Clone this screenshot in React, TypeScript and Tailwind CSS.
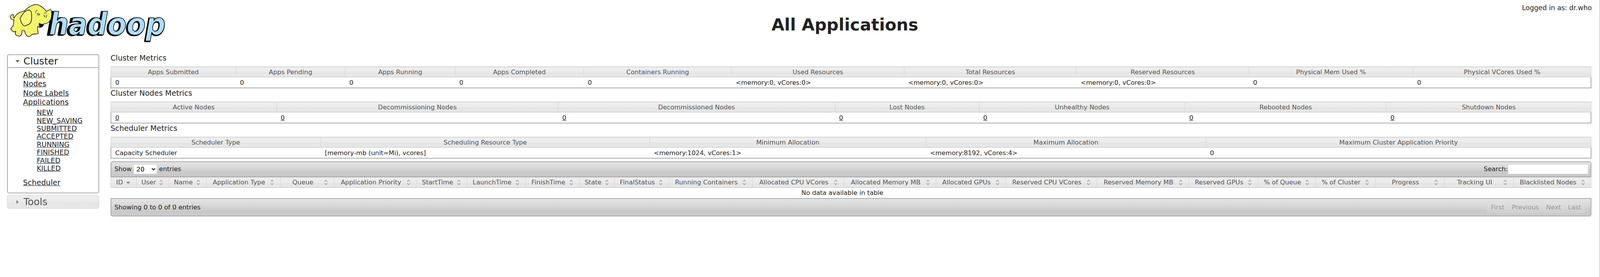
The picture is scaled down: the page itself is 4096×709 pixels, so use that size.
import React from 'react';

const glass = 'bg-[linear-gradient(#eeeeee_0%,#ebebeb_50%,#e5e5e5_58%,#e8e8e8_100%)]';
const widget = 'bg-[linear-gradient(#e4e4e4_0%,#d8d8d8_40%,#c9c9c9_72%,#cbcbcb_100%)]';

const clusterHeads = ['Apps Submitted', 'Apps Pending', 'Apps Running', 'Apps Completed', 'Containers Running', 'Used Resources', 'Total Resources', 'Reserved Resources', 'Physical Mem Used %', 'Physical VCores Used %'];
const clusterVals = ['0', '0', '0', '0', '0', '<memory:0, vCores:0>', '<memory:0, vCores:0>', '<memory:0, vCores:0>', '0', '0'];
const nodeHeads = ['Active Nodes', 'Decommissioning Nodes', 'Decommissioned Nodes', 'Lost Nodes', 'Unhealthy Nodes', 'Rebooted Nodes', 'Shutdown Nodes'];
const schedHeads = ['Scheduler Type', 'Scheduling Resource Type', 'Minimum Allocation', 'Maximum Allocation', 'Maximum Cluster Application Priority'];
const schedVals = ['Capacity Scheduler', '[memory-mb (unit=Mi), vcores]', '<memory:1024, vCores:1>', '<memory:8192, vCores:4>', '0'];
const appHeads = ['ID', 'User', 'Name', 'Application Type', 'Queue', 'Application Priority', 'StartTime', 'LaunchTime', 'FinishTime', 'State', 'FinalStatus', 'Running Containers', 'Allocated CPU VCores', 'Allocated Memory MB', 'Allocated GPUs', 'Reserved CPU VCores', 'Reserved Memory MB', 'Reserved GPUs', '% of Queue', '% of Cluster', 'Progress', 'Tracking UI', 'Blacklisted Nodes'];
const states = ['NEW', 'NEW_SAVING', 'SUBMITTED', 'ACCEPTED', 'RUNNING', 'FINISHED', 'FAILED', 'KILLED'];

const Logo = () => (
  <svg viewBox="0 0 2044 510" className="w-[464px] h-[116px] shrink-0">
    <g fontFamily="'DejaVu Sans', sans-serif" fontWeight="700" fontStyle="italic" fontSize="345">
      <text x="528" y="396" textLength="1335" lengthAdjust="spacingAndGlyphs" fill="#000" stroke="#000" strokeWidth="16" strokeLinejoin="round">hadoop</text>
      <text x="552" y="392" textLength="1315" lengthAdjust="spacingAndGlyphs" fill="#aedcfc" stroke="#000" strokeWidth="7" strokeLinejoin="round">hadoop</text>
    </g>
    <g stroke="#151515" strokeWidth="7" strokeLinejoin="round" strokeLinecap="round">
      <path fill="#f3f36c" d="M400 50 C440 48 490 85 525 128 C540 122 555 105 572 108 C588 115 584 150 580 190 C575 230 550 262 492 270 C490 295 465 312 445 308 C432 302 428 295 425 300 C420 325 430 355 432 376 C410 385 375 382 358 390 C345 410 325 418 305 405 C285 385 280 365 278 345 C262 345 255 342 248 345 C248 375 245 398 222 408 C195 405 175 398 172 380 C172 368 176 360 178 352 C160 365 145 358 128 338 C115 322 130 305 145 298 C150 280 155 250 158 222 C135 228 118 210 118 188 C122 172 135 160 150 165 C152 180 148 192 158 205 C178 160 225 130 272 125 C300 100 340 60 400 50 Z" />
      <path fill="#f6f680" d="M226 210 C245 170 275 125 310 115 C335 110 352 118 354 145 C358 180 358 220 350 245 C340 275 295 292 268 290 C245 280 238 240 226 210 Z" />
      <path fill="#111" d="M443 262 C458 272 475 280 490 272 C488 292 468 306 450 302 C442 290 440 275 443 262 Z" />
      <path fill="none" strokeWidth="5" d="M418 150 C425 160 440 150 452 162 M400 145 C402 130 410 120 418 115 M495 150 C505 145 515 140 525 150 M495 170 C500 190 505 195 510 175 M520 200 C522 190 525 180 528 170" />
      <ellipse cx="432" cy="166" rx="10" ry="9" fill="#eee" strokeWidth="4" />
    </g>
    <path d="M310 70 L335 48 M322 72 L342 58 M95 190 L118 160 M105 198 L122 172" stroke="#999" strokeWidth="4" fill="none" />
  </svg>
);

const SortIcon = ({ active }: { active: boolean }) =>
  active ? (
    <svg viewBox="0 0 10 6" className="w-[10px] h-[6px] shrink-0 ml-[7px] mr-[16px] mt-[2px]">
      <path d="M0 0 H10 L5 6 Z" fill="#888" />
    </svg>
  ) : (
    <svg viewBox="0 0 9 14" className="w-[9px] h-[14px] shrink-0 ml-[9px] mr-[16px]">
      <path d="M1 5 L4.5 1.2 L8 5 M1 9 L4.5 12.8 L8 9" fill="none" stroke="#8c8c8c" strokeWidth="1.3" />
    </svg>
  );

const Metrics = ({ title, grid, heads, vals, link }: { title: string; grid: string; heads: string[]; vals: string[]; link?: boolean }) => (
  <section>
    <h3 className="text-[19.1px] leading-[24px] pt-[1px] mb-[9px] font-normal text-[#222]">{title}</h3>
    <div className={`grid ${grid} h-[28px] border-y-2 border-x border-[#d3d3d3] ${glass} text-[#555]`}>
      {heads.map((h, i) => (
        <div key={h} className={`flex items-center justify-center pt-[1px] ${i ? 'border-l border-[#d3d3d3]' : ''}`}>{h}</div>
      ))}
    </div>
    <div className={`grid ${grid} h-[28px] border-x-2 border-b-2 border-[#aaaaaa] text-[#222]`}>
      {vals.map((v, i) => (
        <div key={i} className="flex items-center pl-[10px] pt-[1px]">
          {link ? <a className="underline">{v}</a> : v}
        </div>
      ))}
    </div>
  </section>
);

export default function App() {
  return (
    <div className="w-[4096px] h-[709px] overflow-hidden bg-white border-r border-[#aaaaaa] font-['DejaVu_Sans',sans-serif] text-[16.35px] leading-[20px] text-[#222]">
      <header className="flex h-[136px]">
        <Logo />
        <h1 className="ml-[1511px] mt-[38px] text-[42.8px] leading-[50px] font-bold text-[#222]">All Applications</h1>
        <div className="ml-auto mr-[20px] mt-[10px] text-[17.3px]">Logged in as: dr.who</div>
      </header>

      <div className="flex">
        <aside className="w-[236px] ml-[18px] mt-[3px] shrink-0">
          <div className="h-[356px] border-2 border-[#aaaaaa] rounded-[5px]">
            <div className="h-[33px] flex items-center border-b-2 border-[#aaaaaa] text-[25px] text-[#222]">
              <svg viewBox="0 0 10 6" className="w-[10px] h-[6px] ml-[20px] mr-[10px]">
                <path d="M0 0 H10 L5 6 Z" fill="#555" />
              </svg>
              Cluster
            </div>
            <div className="pl-[39px] pt-[6px] text-[19.1px] leading-[23.3px]">
              {['About', 'Nodes', 'Node Labels', 'Applications'].map((l) => (
                <div key={l}><a className="underline">{l}</a></div>
              ))}
              <div className="pl-[35px] mt-[5px] text-[17.7px] leading-[20.4px]">
                {states.map((s) => (
                  <div key={s}><a className="underline">{s}</a></div>
                ))}
              </div>
              <div className="mt-[15px]"><a className="underline">Scheduler</a></div>
            </div>
          </div>
          <div className={`h-[35px] mt-[4px] flex items-center border border-[#d3d3d3] rounded-[5px] ${glass} text-[25px] text-[#555]`}>
            <svg viewBox="0 0 6 10" className="w-[6px] h-[10px] ml-[23px] mr-[12px]">
              <path d="M0 0 L6 5 L0 10 Z" fill="#888" />
            </svg>
            Tools
          </div>
        </aside>

        <main className="w-[3791px] ml-[29px]">
          <Metrics
            title="Cluster Metrics"
            grid="grid-cols-[319.3px_280px_281.4px_329px_378.8px_441.5px_441.5px_441.5px_419.7px_1fr]"
            heads={clusterHeads}
            vals={clusterVals}
          />
          <Metrics
            title="Cluster Nodes Metrics"
            grid="grid-cols-[423.5px_720.8px_708.6px_369.2px_527.3px_515.2px_1fr]"
            heads={nodeHeads}
            vals={nodeHeads.map(() => '0')}
            link
          />
          <Metrics
            title="Scheduler Metrics"
            grid="grid-cols-[536.6px_842.1px_707.2px_716.7px_1fr]"
            heads={schedHeads}
            vals={schedVals}
          />

          <div className={`mt-[7px] h-[40px] flex items-center justify-between pl-[8px] pr-[7px] border-2 border-[#aaaaaa] rounded-t-[5px] ${widget}`}>
            <div className="flex items-center gap-[6px]">
              <span>Show</span>
              <select className="w-[58px] h-[23px] bg-white text-black pl-[2px]" defaultValue="20">
                <option>20</option>
              </select>
              <span>entries</span>
            </div>
            <label className="flex items-center gap-[1px]">
              Search:
              <input className="w-[204px] h-[23px] bg-white" />
            </label>
          </div>

          <div className={`grid grid-cols-[65.1px_83.2px_95.3px_189.4px_137.7px_211.2px_129.4px_149.9px_138.3px_89.3px_139px_213.9px_234.3px_235.8px_177.8px_233.7px_235.7px_177px_147.3px_152.6px_177.1px_177.2px_1fr] h-[28px] border-y-2 border-x border-[#d3d3d3] ${glass} text-[#555]`}>
            {appHeads.map((h, i) => (
              <div key={h} className={`flex items-center pl-[12px] whitespace-nowrap ${i ? 'border-l border-[#d3d3d3]' : ''}`}>
                <span className="flex-1 text-center">{h}</span>
                <SortIcon active={i === 0} />
              </div>
            ))}
          </div>

          <div className="h-[26px] flex items-center justify-center pr-[44px] text-[#222]">No data available in table</div>

          <div className={`h-[47px] flex items-center justify-between pl-[8px] pr-[15px] border-2 border-[#aaaaaa] rounded-b-[5px] ${widget}`}>
            <span>Showing 0 to 0 of 0 entries</span>
            <div className="flex h-[29px] text-[#555]/50">
              {[['First', 'w-[54px]'], ['Previous', 'w-[88px]'], ['Next', 'w-[56px]'], ['Last', 'w-[52px]']].map(([t, w]) => (
                <span key={t} className={`${w} flex items-center justify-center bg-[#e6e6e6]/30 border border-[#d3d3d3]/30`}>{t}</span>
              ))}
            </div>
          </div>
        </main>
      </div>
    </div>
  );
}
